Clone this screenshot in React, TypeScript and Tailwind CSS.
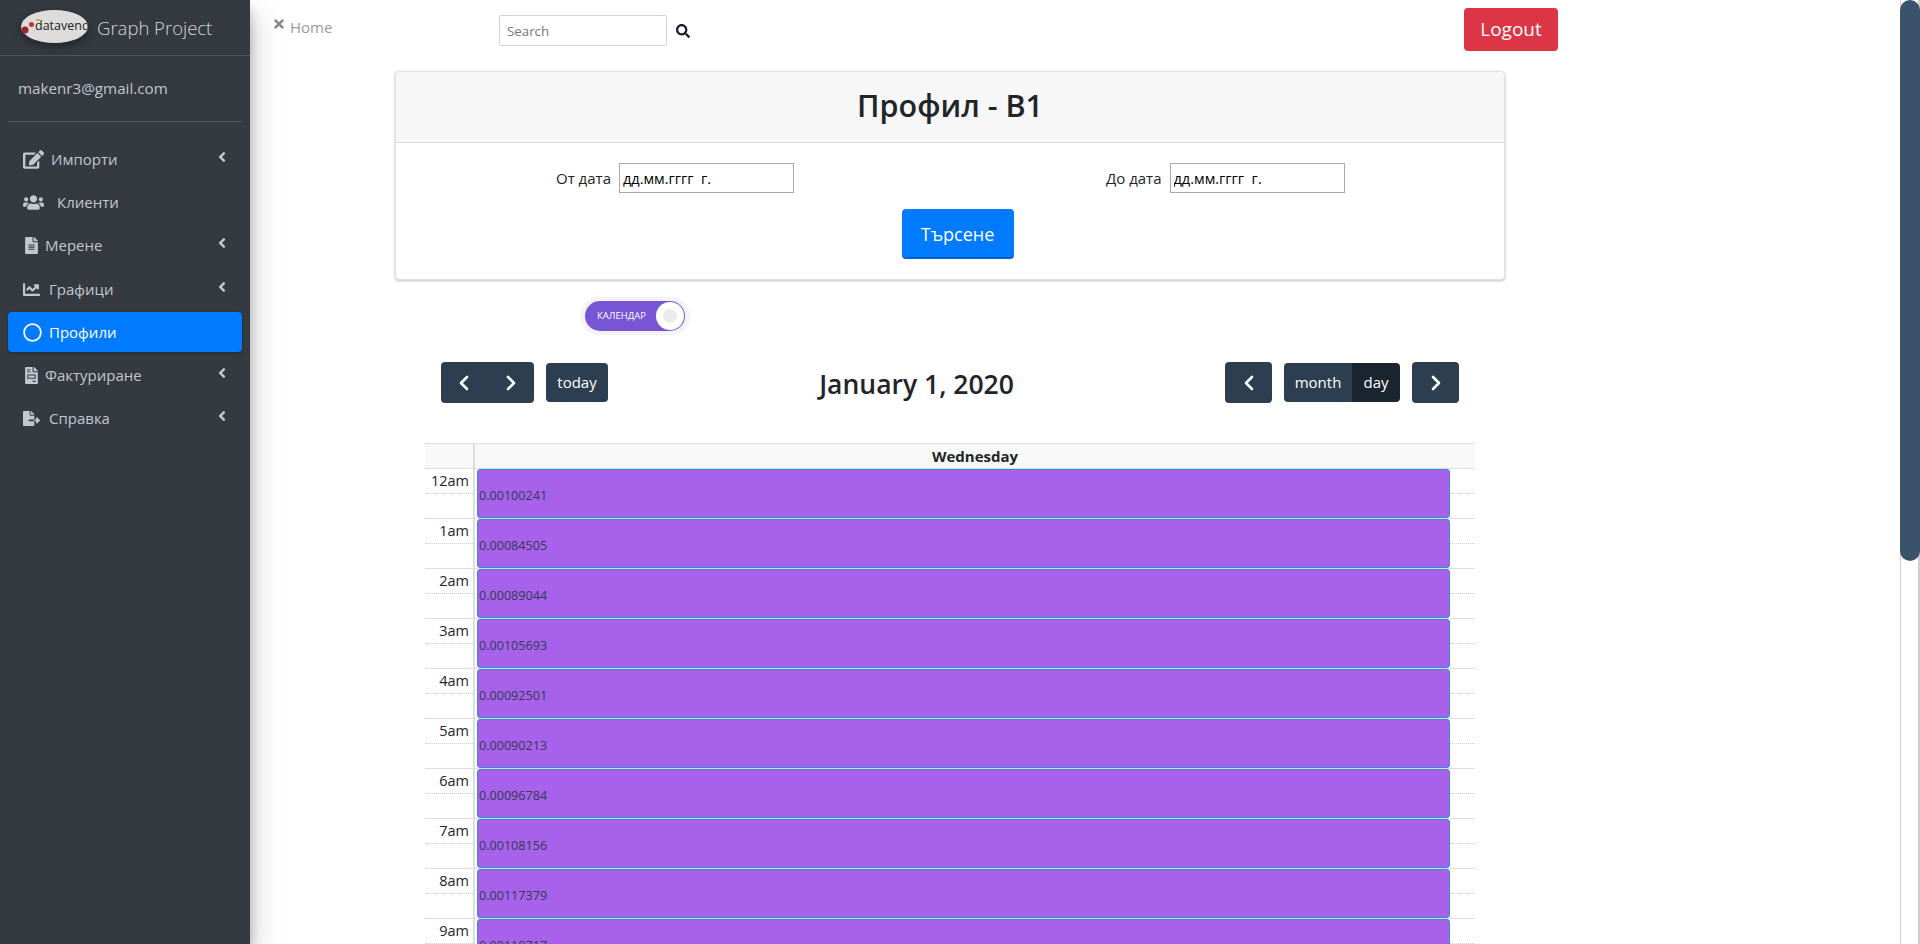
import React from "react";
import { ChevronLeft, ChevronRight } from "lucide-react";
import { FaEdit, FaUsers, FaFileAlt, FaChartLine, FaRegCircle, FaFileInvoice, FaFileExport, FaAngleLeft, FaTimes, FaSearch } from "react-icons/fa";

const menu = [
  { label: "Импорти", icon: <FaEdit size={21} />, text: "ml-[7px]", arrow: true },
  { label: "Клиенти", icon: <FaUsers size={21} />, text: "ml-[13px]", arrow: false },
  { label: "Мерене", icon: <FaFileAlt size={17} />, text: "ml-[5px]", arrow: true },
  { label: "Графици", icon: <FaChartLine size={17} />, text: "ml-[9px]", arrow: true },
  { label: "Профили", icon: <FaRegCircle size={19} />, text: "ml-[7px]", arrow: false, active: true },
  { label: "Фактуриране", icon: <FaFileInvoice size={17} />, text: "ml-[5px]", arrow: true },
  { label: "Справка", icon: <FaFileExport size={17} />, text: "ml-[9px]", arrow: true },
];

const rows = [
  ["12am", "0.00100241"], ["1am", "0.00084505"], ["2am", "0.00089044"], ["3am", "0.00105693"],
  ["4am", "0.00092501"], ["5am", "0.00090213"], ["6am", "0.00096784"], ["7am", "0.00108156"],
  ["8am", "0.00117379"], ["9am", "0.00110717"],
];

function Sidebar() {
  return (
    <aside className="w-[250px] shrink-0 h-full bg-[#343a40] z-10 shadow-[0_14px_28px_rgba(0,0,0,0.25),0_10px_10px_rgba(0,0,0,0.22)]">
      <div className="h-[56px] border-b border-[#4b545c] flex items-center pl-[21px] pb-[3px]">
        <div className="w-[67px] h-[33px] rounded-[50%] bg-[#dcdcdc] shadow-[0_3px_8px_rgba(0,0,0,0.4)] overflow-hidden flex items-center relative shrink-0">
          <svg className="absolute left-0 top-0" width="20" height="33" viewBox="0 0 20 33">
            <circle cx="4" cy="20" r="3.5" fill="#a3232b" />
            <circle cx="10.5" cy="14.5" r="2.5" fill="#cf2e2e" />
            <rect x="15" y="9" width="4" height="2" fill="#e8a33d" />
          </svg>
          <span className="ml-[14px] text-[12.5px] leading-none text-[#222] whitespace-nowrap">datavend</span>
        </div>
        <span className="ml-[9px] mt-[3px] text-[18.5px] font-light text-[rgba(255,255,255,0.8)] whitespace-nowrap">Graph Project</span>
      </div>
      <div className="h-[66px] mx-2 border-b border-[#4f5962] pl-[10px] flex items-center text-[15.2px] text-[#c2c7d0]">makenr3@gmail.com</div>
      <nav className="mt-[17px]">
        {menu.map((m, i) => (
          <div
            key={m.label}
            className={
              "mx-2 mb-[3px] h-10 rounded-[4px] flex items-center pl-[15px] pr-[12px] text-[15px] " +
              (i === 3 ? "mt-[4px] " : "") +
              (m.active ? "bg-[#007bff] text-white font-medium shadow-[0_1px_3px_rgba(0,0,0,0.3)]" : "text-[#c2c7d0]")
            }
          >
            <span className={m.active ? "text-white" : "text-[#c2c7d0]"}>{m.icon}</span>
            <span className={m.text + " flex-1"}>{m.label}</span>
            {m.arrow && <FaAngleLeft size={16} className="-mt-1" />}
          </div>
        ))}
      </nav>
    </aside>
  );
}

function DateField({ label, className }: { label: string; className: string }) {
  return (
    <div className={"flex items-center " + className}>
      <label className="text-[15px] text-[#212529] mr-[8px]">{label}</label>
      <input
        readOnly
        placeholder="дд.мм.гггг  г."
        className="w-[175px] h-[30px] border border-[#a9a9a9] bg-white px-[3px] text-[14.5px] text-black placeholder:text-black outline-none"
      />
    </div>
  );
}

function NavBtn({ children, className }: { children: React.ReactNode; className: string }) {
  return <div className={"flex items-center justify-center bg-[#2c3e50] text-white rounded-[4px] " + className}>{children}</div>;
}

function Calendar() {
  return (
    <div className="ml-[175px] w-[1050px] mt-[40px] border-t border-[#ddd]">
      <div className="flex h-[24px] bg-[#f9f9f9]">
        <div className="w-[50px] border-r-2 border-[#ddd]" />
        <div className="flex-1 text-center text-[15px] font-bold text-[#212529] leading-[24px]">Wednesday</div>
      </div>
      {rows.map(([t, v]) => (
        <div key={t} className="flex h-[50px] border-t border-[#ddd]">
          <div className="w-[50px] shrink-0 border-r-2 border-[#ddd]">
            <div className="h-[25px] border-b border-dotted border-[#ccc] text-right pr-[4px] text-[14.5px] leading-[24px] text-[#212529]">{t}</div>
          </div>
          <div className="flex-1 ml-[2px] mb-[1px] h-[49px] rounded-[3px] border border-[#3788d8] bg-[#a861ea] flex items-end pb-[13px] pl-[1px] text-[12.6px] leading-[16px] text-[#2c3e50]">
            {v}
          </div>
          <div className="w-[25px] shrink-0">
            <div className="h-[25px] border-b border-dotted border-[#ccc]" />
          </div>
        </div>
      ))}
    </div>
  );
}

export default function App() {
  return (
    <div className="flex h-screen w-full overflow-hidden bg-white font-['Open_Sans',sans-serif]">
      <Sidebar />
      <main className="flex-1 h-full overflow-hidden">
        <header className="h-[71px] flex items-start">
          <div className="ml-[22px] mt-[17px] flex items-start text-[#999] w-[62px]">
            <FaTimes size={14} className="text-[#888] shrink-0" />
            <span className="ml-[4px] text-[15px] leading-[20px]">Home</span>
          </div>
          <input
            readOnly
            placeholder="Search"
            className="ml-[165px] mt-[15px] w-[168px] h-[31px] rounded-[2px] border border-[#ced4da] px-[7px] text-[13.3px] placeholder:text-[#777] outline-none"
          />
          <FaSearch size={14} className="ml-[9px] mt-[24px] text-[#14202b]" />
          <div className="ml-[774px] mt-[8px] w-[94px] h-[43px] rounded-[4px] bg-[#dc3545] text-white text-[19px] flex items-center justify-center">Logout</div>
        </header>

        <section className="ml-[145px] w-[1110px] h-[209px] rounded-[4px] border border-[#e0e0e0] bg-white shadow-[0_1px_3px_rgba(0,0,0,0.25)]">
          <div className="h-[71px] pb-[3px] bg-[#f7f7f7] border-b border-[#d8d8d8] rounded-t-[4px] flex items-center justify-center text-[30.5px] font-semibold text-[#212529]">
            Профил - B1
          </div>
          <div className="flex mt-[20px]">
            <DateField label="От дата" className="ml-[160px]" />
            <DateField label="До дата" className="ml-[312px]" />
          </div>
          <div className="flex justify-center mt-[16px]">
            <div className="ml-[15px] pt-[2px] w-[112px] h-[50px] rounded-[4px] bg-[#007bff] border-b-2 border-[#0062cc] text-white text-[18px] flex items-center justify-center">Търсене</div>
          </div>
        </section>

        <div className="ml-[330px] mt-[17px] w-[110px] h-[38px] rounded-[19px] bg-[#f4f4f4] flex items-center justify-center">
          <div className="w-[100px] h-[30px] rounded-[15px] bg-[#7755d5] flex items-center pl-[12px] pr-[1px] justify-between">
            <span className="text-[9.5px] font-medium text-white">КАЛЕНДАР</span>
            <div className="w-[28px] h-[28px] rounded-full bg-white flex items-center justify-center">
              <div className="w-[14px] h-[14px] rounded-full bg-[#ebebeb]" />
            </div>
          </div>
        </div>

        <div className="ml-[191px] mt-[27px] h-[41px] w-[1018px] flex items-center justify-between">
          <div className="flex items-center gap-[12px]">
            <NavBtn className="w-[93px] h-[41px] gap-[23px]">
              <ChevronLeft size={24} strokeWidth={2.6} />
              <ChevronRight size={24} strokeWidth={2.6} />
            </NavBtn>
            <NavBtn className="w-[62px] h-[39px] text-[15px]">today</NavBtn>
          </div>
          <div className="h-[41px] leading-[45px] text-[26.5px] font-semibold text-[#212529]">January 1, 2020</div>
          <div className="flex items-center gap-[12px]">
            <NavBtn className="w-[47px] h-[41px]"><ChevronLeft size={24} strokeWidth={2.6} /></NavBtn>
            <div className="flex h-[39px] rounded-[4px] overflow-hidden text-white text-[15px]">
              <div className="w-[68px] bg-[#2c3e50] flex items-center justify-center">month</div>
              <div className="w-[48px] bg-[#1a252f] flex items-center justify-center">day</div>
            </div>
            <NavBtn className="w-[47px] h-[41px]"><ChevronRight size={24} strokeWidth={2.6} /></NavBtn>
          </div>
        </div>

        <Calendar />
      </main>
      <div className="w-5 shrink-0 h-full bg-white border-l border-r-2 border-[#cfcfcf]">
        <div className="h-[561px] -ml-px -mr-[2px] rounded-[10px] bg-[#3a536b]" />
      </div>
    </div>
  );
}
